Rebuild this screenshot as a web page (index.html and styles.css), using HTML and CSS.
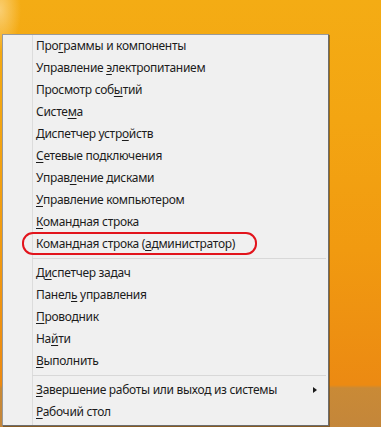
FILE: index.html
```html
<!DOCTYPE html>
<html lang="ru">
<head>
<meta charset="utf-8">
<link rel="stylesheet" href="styles.css">
</head>
<body>
<div class="desktop">
  <div class="menu">
    <div class="item">Про<u>г</u>раммы и компоненты</div>
    <div class="item">Управление <u>э</u>лектропитанием</div>
    <div class="item">Просмотр соб<u>ы</u>тий</div>
    <div class="item">Систе<u>м</u>а</div>
    <div class="item">Диспетчер устр<u>о</u>йств</div>
    <div class="item"><u>С</u>етевые подключения</div>
    <div class="item">Управ<u>л</u>ение дисками</div>
    <div class="item"><u>У</u>правление компьютером</div>
    <div class="item"><u>К</u>омандная строка</div>
    <div class="item marked">Командная строка (<u>а</u>дминистратор)<span class="oval"></span></div>
    <div class="sep"></div>
    <div class="item">Д<u>и</u>спетчер задач</div>
    <div class="item">Панел<u>ь</u> управления</div>
    <div class="item"><u>П</u>роводник</div>
    <div class="item">На<u>й</u>ти</div>
    <div class="item"><u>В</u>ыполнить</div>
    <div class="sep"></div>
    <div class="item sub"><span><u>З</u>авершение работы или выход из системы</span><span class="arrow"></span></div>
    <div class="item"><u>Р</u>абочий стол</div>
  </div>
</div>
</body>
</html>
```
FILE: styles.css
```css
html, body {
  margin: 0;
  padding: 0;
}
body {
  width: 381px;
  height: 427px;
  overflow: hidden;
}
.desktop {
  width: 381px;
  height: 427px;
  padding-top: 34px;
  padding-left: 2px;
  box-sizing: border-box;
  background:
    radial-gradient(ellipse 30px 60px at 0px 10px, rgba(255, 235, 190, 0.55), rgba(255, 235, 190, 0) 70%),
    linear-gradient(to bottom, rgba(0,0,0,0) 385px, #c98a36 388px, #c4863a 427px),
    linear-gradient(to bottom, #f4ac14 0px, #f3a512 120px, #f19a10 250px, #ec8a12 384px);
}
.menu {
  position: relative;
  width: 325px;
  border: 1px solid #9a9a9a;
  border-right-color: #6d6d6d;
  border-bottom-color: #6d6d6d;
  box-shadow: 1px 1px 0 rgba(60, 40, 10, 0.45);
  padding-bottom: 2px;
  background:
    linear-gradient(to right, transparent 29px, #dcdcdc 29px, #dcdcdc 30px, transparent 30px),
    #f0f0f0;
  font-family: "Noto Sans", "Open Sans", sans-serif;
  font-size: 12px;
  letter-spacing: -0.3px;
  color: #1c1c1c;
}
.item {
  position: relative;
  height: 22px;
  line-height: 22px;
  padding-left: 33px;
  white-space: nowrap;
}
.item u {
  text-decoration-thickness: 1px;
  text-underline-offset: 2px;
}
.sub {
  display: flex;
  justify-content: space-between;
  align-items: center;
  padding-right: 11px;
}
.arrow {
  width: 0;
  height: 0;
  border-top: 3.5px solid transparent;
  border-bottom: 3.5px solid transparent;
  border-left: 4px solid #1a1a1a;
}
.sep {
  height: 7px;
  margin-left: 29px;
  margin-right: 2px;
  background: linear-gradient(to bottom, transparent 3px, #d8d8d8 3px, #d8d8d8 4px, transparent 4px);
}
.oval {
  position: absolute;
  left: 19px;
  top: -1px;
  width: 231px;
  height: 19px;
  border: 2px solid #e2141c;
  border-radius: 11px;
}
```
